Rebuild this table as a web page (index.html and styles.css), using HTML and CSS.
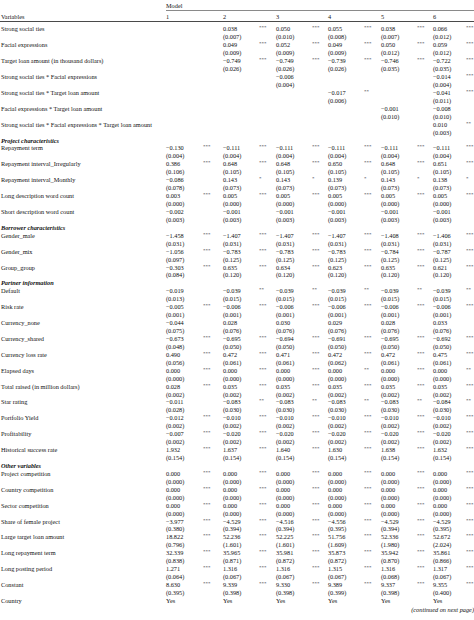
FILE: index.html
```html
<!DOCTYPE html>
<html>
<head>
<meta charset="utf-8">
<link rel="stylesheet" href="styles.css">
</head>
<body>
<table class="reg">
<colgroup>
<col class="c-lab"><col class="c-v1"><col class="c-s1"><col class="c-v2"><col class="c-s2"><col class="c-v3"><col class="c-s3"><col class="c-v4"><col class="c-s4"><col class="c-v5"><col class="c-s5"><col class="c-v6"><col class="c-s6">
</colgroup>
<thead>
<tr class="h1"><th></th><th colspan="12" class="model">Model</th></tr>
<tr class="h2"><th>Variables</th><th>1</th><th></th><th>2</th><th></th><th>3</th><th></th><th>4</th><th></th><th>5</th><th></th><th>6</th><th></th></tr>
</thead>
<tbody>
<tr><th>Strong social ties</th><td></td><td></td><td>0.038<br>(0.007)</td><td class="s">***</td><td>0.050<br>(0.010)</td><td class="s">***</td><td>0.055<br>(0.008)</td><td class="s">***</td><td>0.038<br>(0.007)</td><td class="s">***</td><td>0.066<br>(0.012)</td><td class="s">***</td></tr>
<tr><th>Facial expressions</th><td></td><td></td><td>0.049<br>(0.009)</td><td class="s">***</td><td>0.052<br>(0.009)</td><td class="s">***</td><td>0.049<br>(0.009)</td><td class="s">***</td><td>0.050<br>(0.012)</td><td class="s">***</td><td>0.059<br>(0.012)</td><td class="s">***</td></tr>
<tr><th>Target loan amount (in thousand dollars)</th><td></td><td></td><td>−0.749<br>(0.026)</td><td class="s">***</td><td>−0.749<br>(0.026)</td><td class="s">***</td><td>−0.739<br>(0.026)</td><td class="s">***</td><td>−0.746<br>(0.035)</td><td class="s">***</td><td>−0.722<br>(0.035)</td><td class="s">***</td></tr>
<tr><th>Strong social ties * Facial expressions</th><td></td><td></td><td></td><td></td><td>−0.006<br>(0.004)</td><td class="s"></td><td></td><td></td><td></td><td></td><td>−0.014<br>(0.004)</td><td class="s">***</td></tr>
<tr><th>Strong social ties * Target loan amount</th><td></td><td></td><td></td><td></td><td></td><td></td><td>−0.017<br>(0.006)</td><td class="s">**</td><td></td><td></td><td>−0.041<br>(0.011)</td><td class="s">***</td></tr>
<tr><th>Facial expressions * Target loan amount</th><td></td><td></td><td></td><td></td><td></td><td></td><td></td><td></td><td>−0.001<br>(0.010)</td><td class="s"></td><td>−0.008<br>(0.010)</td><td class="s"></td></tr>
<tr><th>Strong social ties * Facial expressions * Target loan amount</th><td></td><td></td><td></td><td></td><td></td><td></td><td></td><td></td><td></td><td></td><td>0.010<br>(0.003)</td><td class="s">**</td></tr>

<tr class="sec"><th colspan="13">Project characteristics</th></tr>
<tr><th>Repayment term</th><td>−0.130<br>(0.004)</td><td class="s">***</td><td>−0.111<br>(0.004)</td><td class="s">***</td><td>−0.111<br>(0.004)</td><td class="s">***</td><td>−0.111<br>(0.004)</td><td class="s">***</td><td>−0.111<br>(0.004)</td><td class="s">***</td><td>−0.111<br>(0.004)</td><td class="s">***</td></tr>
<tr><th>Repayment interval_Irregularly</th><td>0.386<br>(0.106)</td><td class="s">***</td><td>0.648<br>(0.105)</td><td class="s">***</td><td>0.648<br>(0.105)</td><td class="s">***</td><td>0.650<br>(0.105)</td><td class="s">***</td><td>0.648<br>(0.105)</td><td class="s">***</td><td>0.651<br>(0.105)</td><td class="s">***</td></tr>
<tr><th>Repayment interval_Monthly</th><td>−0.086<br>(0.078)</td><td class="s"></td><td>0.143<br>(0.073)</td><td class="s">*</td><td>0.143<br>(0.073)</td><td class="s">*</td><td>0.139<br>(0.073)</td><td class="s">*</td><td>0.143<br>(0.073)</td><td class="s">*</td><td>0.138<br>(0.073)</td><td class="s">*</td></tr>
<tr><th>Long description word count</th><td>0.003<br>(0.000)</td><td class="s">***</td><td>0.005<br>(0.000)</td><td class="s">***</td><td>0.005<br>(0.000)</td><td class="s">***</td><td>0.005<br>(0.000)</td><td class="s">***</td><td>0.005<br>(0.000)</td><td class="s">***</td><td>0.005<br>(0.000)</td><td class="s">***</td></tr>
<tr><th>Short description word count</th><td>−0.002<br>(0.003)</td><td class="s"></td><td>−0.001<br>(0.003)</td><td class="s"></td><td>−0.001<br>(0.003)</td><td class="s"></td><td>−0.001<br>(0.003)</td><td class="s"></td><td>−0.001<br>(0.003)</td><td class="s"></td><td>−0.001<br>(0.003)</td><td class="s"></td></tr>

<tr class="sec"><th colspan="13">Borrower characteristics</th></tr>
<tr><th>Gender_male</th><td>−1.458<br>(0.031)</td><td class="s">***</td><td>−1.407<br>(0.031)</td><td class="s">***</td><td>−1.407<br>(0.031)</td><td class="s">***</td><td>−1.407<br>(0.031)</td><td class="s">***</td><td>−1.408<br>(0.031)</td><td class="s">***</td><td>−1.406<br>(0.031)</td><td class="s">***</td></tr>
<tr><th>Gender_mix</th><td>−1.056<br>(0.097)</td><td class="s">***</td><td>−0.783<br>(0.125)</td><td class="s">***</td><td>−0.783<br>(0.125)</td><td class="s">***</td><td>−0.783<br>(0.125)</td><td class="s">***</td><td>−0.784<br>(0.125)</td><td class="s">***</td><td>−0.787<br>(0.125)</td><td class="s">***</td></tr>
<tr><th>Group_group</th><td>−0.303<br>(0.084)</td><td class="s">***</td><td>0.635<br>(0.120)</td><td class="s">***</td><td>0.634<br>(0.120)</td><td class="s">***</td><td>0.623<br>(0.120)</td><td class="s">***</td><td>0.635<br>(0.120)</td><td class="s">***</td><td>0.621<br>(0.120)</td><td class="s">***</td></tr>

<tr class="sec"><th colspan="13">Partner information</th></tr>
<tr><th>Default</th><td>−0.019<br>(0.013)</td><td class="s"></td><td>−0.039<br>(0.015)</td><td class="s">**</td><td>−0.039<br>(0.015)</td><td class="s">**</td><td>−0.039<br>(0.015)</td><td class="s">**</td><td>−0.039<br>(0.015)</td><td class="s">**</td><td>−0.039<br>(0.015)</td><td class="s">**</td></tr>
<tr><th>Risk rate</th><td>−0.005<br>(0.001)</td><td class="s">***</td><td>−0.006<br>(0.001)</td><td class="s">***</td><td>−0.006<br>(0.001)</td><td class="s">***</td><td>−0.006<br>(0.001)</td><td class="s">***</td><td>−0.006<br>(0.001)</td><td class="s">***</td><td>−0.006<br>(0.001)</td><td class="s">***</td></tr>
<tr><th>Currency_none</th><td>−0.044<br>(0.075)</td><td class="s"></td><td>0.028<br>(0.076)</td><td class="s"></td><td>0.030<br>(0.076)</td><td class="s"></td><td>0.029<br>(0.076)</td><td class="s"></td><td>0.028<br>(0.076)</td><td class="s"></td><td>0.033<br>(0.076)</td><td class="s"></td></tr>
<tr><th>Currency_shared</th><td>−0.673<br>(0.048)</td><td class="s">***</td><td>−0.695<br>(0.050)</td><td class="s">***</td><td>−0.694<br>(0.050)</td><td class="s">***</td><td>−0.691<br>(0.050)</td><td class="s">***</td><td>−0.695<br>(0.050)</td><td class="s">***</td><td>−0.692<br>(0.050)</td><td class="s">***</td></tr>
<tr><th>Currency loss rate</th><td>0.490<br>(0.056)</td><td class="s">***</td><td>0.472<br>(0.061)</td><td class="s">***</td><td>0.471<br>(0.061)</td><td class="s">***</td><td>0.472<br>(0.062)</td><td class="s">***</td><td>0.472<br>(0.061)</td><td class="s">***</td><td>0.475<br>(0.061)</td><td class="s">***</td></tr>
<tr><th>Elapsed days</th><td>0.000<br>(0.000)</td><td class="s">***</td><td>0.000<br>(0.000)</td><td class="s">***</td><td>0.000<br>(0.000)</td><td class="s">***</td><td>0.000<br>(0.000)</td><td class="s">**</td><td>0.000<br>(0.000)</td><td class="s">***</td><td>0.000<br>(0.000)</td><td class="s">**</td></tr>
<tr><th>Total raised (in million dollars)</th><td>0.028<br>(0.002)</td><td class="s">***</td><td>0.035<br>(0.002)</td><td class="s">***</td><td>0.035<br>(0.002)</td><td class="s">***</td><td>0.035<br>(0.002)</td><td class="s">***</td><td>0.035<br>(0.002)</td><td class="s">***</td><td>0.035<br>(0.002)</td><td class="s">***</td></tr>
<tr><th>Star rating</th><td>−0.011<br>(0.028)</td><td class="s"></td><td>−0.083<br>(0.030)</td><td class="s">**</td><td>−0.083<br>(0.030)</td><td class="s">**</td><td>−0.083<br>(0.030)</td><td class="s">**</td><td>−0.083<br>(0.030)</td><td class="s">**</td><td>−0.084<br>(0.030)</td><td class="s">**</td></tr>
<tr><th>Portfolio Yield</th><td>−0.012<br>(0.002)</td><td class="s">***</td><td>−0.010<br>(0.002)</td><td class="s">***</td><td>−0.010<br>(0.002)</td><td class="s">***</td><td>−0.010<br>(0.002)</td><td class="s">***</td><td>−0.010<br>(0.002)</td><td class="s">***</td><td>−0.010<br>(0.002)</td><td class="s">***</td></tr>
<tr><th>Profitability</th><td>−0.007<br>(0.002)</td><td class="s">***</td><td>−0.020<br>(0.002)</td><td class="s">***</td><td>−0.020<br>(0.002)</td><td class="s">***</td><td>−0.020<br>(0.002)</td><td class="s">***</td><td>−0.020<br>(0.002)</td><td class="s">***</td><td>−0.020<br>(0.002)</td><td class="s">***</td></tr>
<tr><th>Historical success rate</th><td>1.932<br>(0.154)</td><td class="s">***</td><td>1.637<br>(0.154)</td><td class="s">***</td><td>1.640<br>(0.154)</td><td class="s">***</td><td>1.630<br>(0.154)</td><td class="s">***</td><td>1.638<br>(0.154)</td><td class="s">***</td><td>1.632<br>(0.154)</td><td class="s">***</td></tr>

<tr class="sec"><th colspan="13">Other variables</th></tr>
<tr><th>Project competition</th><td>0.000<br>(0.000)</td><td class="s">***</td><td>0.000<br>(0.000)</td><td class="s">***</td><td>0.000<br>(0.000)</td><td class="s">***</td><td>0.000<br>(0.000)</td><td class="s">***</td><td>0.000<br>(0.000)</td><td class="s">***</td><td>0.000<br>(0.000)</td><td class="s">***</td></tr>
<tr><th>Country competition</th><td>0.000<br>(0.000)</td><td class="s">***</td><td>0.000<br>(0.000)</td><td class="s">***</td><td>0.000<br>(0.000)</td><td class="s">***</td><td>0.000<br>(0.000)</td><td class="s">***</td><td>0.000<br>(0.000)</td><td class="s">***</td><td>0.000<br>(0.000)</td><td class="s">***</td></tr>
<tr><th>Sector competition</th><td>0.000<br>(0.000)</td><td class="s">***</td><td>0.000<br>(0.000)</td><td class="s">***</td><td>0.000<br>(0.000)</td><td class="s">***</td><td>0.000<br>(0.000)</td><td class="s">***</td><td>0.000<br>(0.000)</td><td class="s">***</td><td>0.000<br>(0.000)</td><td class="s">***</td></tr>
<tr><th>Share of female project</th><td>−3.977<br>(0.380)</td><td class="s">***</td><td>−4.529<br>(0.394)</td><td class="s">***</td><td>−4.516<br>(0.394)</td><td class="s">***</td><td>−4.556<br>(0.395)</td><td class="s">***</td><td>−4.529<br>(0.394)</td><td class="s">***</td><td>−4.529<br>(0.395)</td><td class="s">***</td></tr>
<tr><th>Large target loan amount</th><td>18.822<br>(0.796)</td><td class="s">***</td><td>52.236<br>(1.601)</td><td class="s">***</td><td>52.225<br>(1.601)</td><td class="s">***</td><td>51.756<br>(1.609)</td><td class="s">***</td><td>52.336<br>(1.980)</td><td class="s">***</td><td>52.672<br>(2.024)</td><td class="s">***</td></tr>
<tr><th>Long repayment term</th><td>32.339<br>(0.838)</td><td class="s">***</td><td>35.965<br>(0.871)</td><td class="s">***</td><td>35.981<br>(0.872)</td><td class="s">***</td><td>35.873<br>(0.872)</td><td class="s">***</td><td>35.942<br>(0.870)</td><td class="s">***</td><td>35.861<br>(0.866)</td><td class="s">***</td></tr>
<tr><th>Long posting period</th><td>1.271<br>(0.064)</td><td class="s">***</td><td>1.316<br>(0.067)</td><td class="s">***</td><td>1.316<br>(0.067)</td><td class="s">***</td><td>1.315<br>(0.067)</td><td class="s">***</td><td>1.316<br>(0.068)</td><td class="s">***</td><td>1.317<br>(0.067)</td><td class="s">***</td></tr>
<tr><th>Constant</th><td>8.630<br>(0.395)</td><td class="s">***</td><td>9.339<br>(0.398)</td><td class="s">***</td><td>9.330<br>(0.398)</td><td class="s">***</td><td>9.389<br>(0.399)</td><td class="s">***</td><td>9.337<br>(0.398)</td><td class="s">***</td><td>9.355<br>(0.400)</td><td class="s">***</td></tr>
<tr><th>Country</th><td>Yes</td><td class="s"></td><td>Yes</td><td class="s"></td><td>Yes</td><td class="s"></td><td>Yes</td><td class="s"></td><td>Yes</td><td class="s"></td><td>Yes</td><td class="s"></td></tr>
</tbody>
</table>
<p class="cont">(continued on next page)</p>
</body>
</html>
```

FILE: styles.css
```css
html, body {
  margin: 0;
  padding: 0;
  background: #ffffff;
}

body {
  font-family: "Liberation Serif", "Times New Roman", serif;
  font-size: 6.3px;
  color: #111111;
  width: 474px;
  overflow: hidden;
}

.reg {
  width: 474px;
  table-layout: fixed;
  border-collapse: collapse;
  border-spacing: 0;
}

.c-lab { width: 166px; }
.c-v1 { width: 37px; }
.c-s1 { width: 20px; }
.c-v2 { width: 36px; }
.c-s2 { width: 17px; }
.c-v3 { width: 36px; }
.c-s3 { width: 16px; }
.c-v4 { width: 36px; }
.c-s4 { width: 17px; }
.c-v5 { width: 36px; }
.c-s5 { width: 16px; }
.c-v6 { width: 33px; }
.c-s6 { width: 8px; }

.reg th,
.reg td {
  padding: 0;
  margin: 0;
  text-align: left;
  vertical-align: top;
  font-weight: normal;
  line-height: 7.93px;
  white-space: nowrap;
  overflow: visible;
}

.reg tbody th {
  padding-left: 1px;
}

.h1 th {
  padding-top: 1.5px;
  line-height: 8px;
}

.h1 .model {
  border-bottom: 0.8px solid #8a8a8a;
}

.h2 th {
  padding-top: 2.5px;
  line-height: 8px;
  border-bottom: 1.2px solid #4a4a4a;
}

.h2 th:first-child {
  padding-left: 1px;
}

.reg tbody tr:first-child th,
.reg tbody tr:first-child td {
  padding-top: 3.4px;
}

.reg td.s {
  font-size: 5px;
  line-height: 6.6px;
  color: #333333;
}

.sec th {
  font-weight: bold;
  font-style: italic;
}

.cont {
  margin: 1.5px 0 0 0;
  text-align: right;
  font-style: italic;
  line-height: 8px;
}
```
